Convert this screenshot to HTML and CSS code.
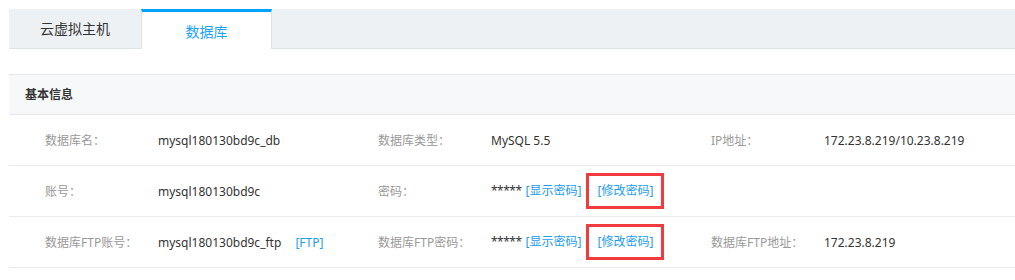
FILE: index.html
```html
<!DOCTYPE html>
<html lang="zh-CN">
<head>
  <meta charset="UTF-8">
  <title>数据库</title>
  <link rel="stylesheet" href="styles.css">
</head>
<body>

<div class="tabs">
  <div class="tab">云虚拟主机</div>
  <div class="tab active">数据库</div>
</div>

<div class="panel">
  <div class="panel-head">基本信息</div>

  <div class="row">
    <div class="cell">
      <span class="label">数据库名：</span>
      <span class="value">mysql180130bd9c_db</span>
    </div>
    <div class="cell">
      <span class="label">数据库类型：</span>
      <span class="value">MySQL 5.5</span>
    </div>
    <div class="cell">
      <span class="label">IP地址：</span>
      <span class="value">172.23.8.219/10.23.8.219</span>
    </div>
  </div>

  <div class="row">
    <div class="cell">
      <span class="label">账号：</span>
      <span class="value">mysql180130bd9c</span>
    </div>
    <div class="cell">
      <span class="label">密码：</span>
      <span class="value"><span class="stars">*****</span><a class="link">[显示密码]</a><a class="link marked">[修改密码]</a></span>
    </div>
    <div class="cell"></div>
  </div>

  <div class="row">
    <div class="cell">
      <span class="label">数据库FTP账号：</span>
      <span class="value">mysql180130bd9c_ftp <a class="link ftp">[FTP]</a></span>
    </div>
    <div class="cell">
      <span class="label">数据库FTP密码：</span>
      <span class="value"><span class="stars">*****</span><a class="link">[显示密码]</a><a class="link marked">[修改密码]</a></span>
    </div>
    <div class="cell">
      <span class="label">数据库FTP地址：</span>
      <span class="value">172.23.8.219</span>
    </div>
  </div>
</div>

</body>
</html>
```

FILE: styles.css
```css
body {
  margin: 9px 0 0 9px;
  font-family: "Noto Sans", "Noto Sans CJK SC", sans-serif;
  font-size: 12px;
  color: #333;
  background: #fff;
}

.tabs {
  display: flex;
  height: 39px;
  background: #eef1f4;
  border-bottom: 1px solid #dfe3e8;
}

.tab {
  width: 132px;
  line-height: 39px;
  text-align: center;
  font-size: 14px;
  color: #333;
}

.tab.active {
  width: 129px;
  height: 37px;
  line-height: 40px;
  background: #fff;
  color: #1aa3f0;
  border-top: 3px solid #00a2ff;
  border-left: 1px solid #dfe3e8;
  border-right: 1px solid #dfe3e8;
}

.panel {
  margin-top: 25px;
}

.panel-head {
  height: 39px;
  line-height: 39px;
  padding-left: 16px;
  background: #f7f8fa;
  border-top: 1px solid #e3e6ea;
  border-bottom: 1px solid #e3e6ea;
  font-weight: bold;
  color: #333;
}

.row {
  display: flex;
  height: 50px;
  align-items: center;
  padding-left: 36px;
  border-bottom: 1px solid #e8eaed;
  overflow: hidden;
}

.cell {
  display: flex;
  align-items: center;
  flex-shrink: 0;
  width: 333px;
}

.label {
  width: 113px;
  flex-shrink: 0;
  color: #999;
}

.value {
  color: #333;
  white-space: nowrap;
}

.stars {
  letter-spacing: -0.5px;
  margin-right: 4px;
}

.link {
  color: #1a9cf0;
  cursor: pointer;
}

.link.ftp {
  margin-left: 11px;
}

.link.marked {
  display: inline-block;
  margin-left: 5px;
  padding: 0 8px;
  line-height: 30px;
  border: 3px solid #f03c3c;
}
```
